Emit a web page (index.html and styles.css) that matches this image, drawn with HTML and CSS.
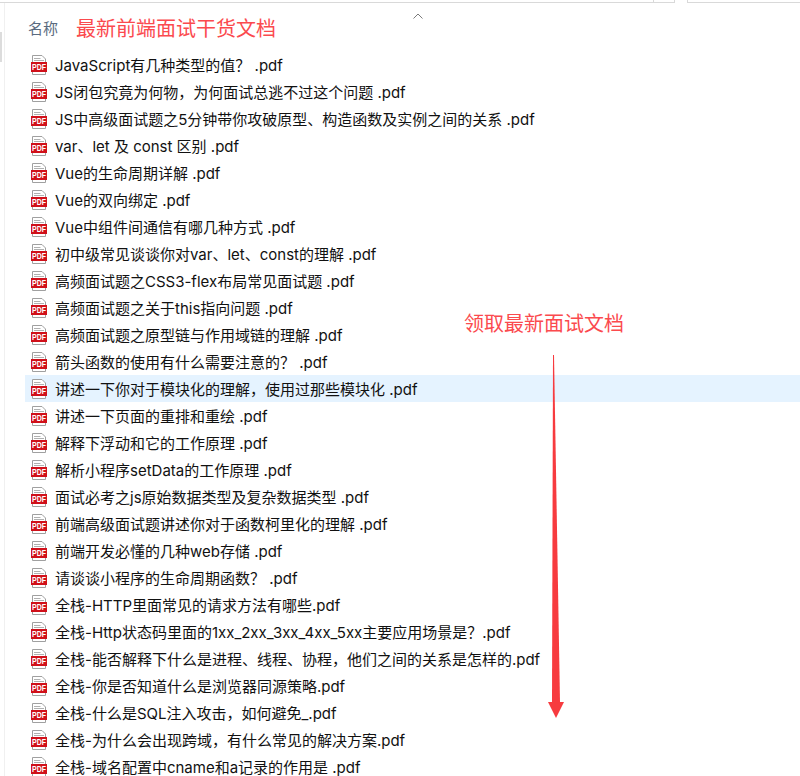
FILE: index.html
```html
<!DOCTYPE html>
<html lang="zh-CN">
<head>
    <meta charset="UTF-8">
    <title>最新前端面试干货文档</title>
    <link rel="stylesheet" href="styles.css">
</head>
<body>
    <svg class="defs">
        <symbol id="pdf" viewBox="0 0 16 20">
            <path d="M1.500 .5H11L14.500 4V19.500H1.500Z" fill="#fff" stroke="#a0a0a0"/>
            <path d="M3 3.500H9.500M3 5.500H13" stroke="#b0b0b0"/>
            <rect x="0" y="7" width="16" height="10" fill="#d0101a"/>
            <text x="8" y="15" class="pdf-label" textLength="14" lengthAdjust="spacingAndGlyphs">PDF</text>
        </symbol>
    </svg>

    <div class="topbar">
        <div class="topbar-main"></div>
        <div class="topbar-cell"></div>
        <div class="topbar-search"></div>
    </div>

    <div class="main">
        <div class="rail"></div>
        <div class="pane">
            <div class="header">
                <span class="header-name">名称</span>
                <span class="title-note">最新前端面试干货文档</span>
                <svg class="sort-arrow" width="10" height="6" viewBox="0 0 10 6"><path d="M.5 5.500L5 1L9.500 5.500" fill="none" stroke="#7a7a7a"/></svg>
            </div>
            <ul class="files">
                <li><svg class="icon"><use href="#pdf"/></svg>JavaScript有几种类型的值？ .pdf</li>
                <li><svg class="icon"><use href="#pdf"/></svg>JS闭包究竟为何物，为何面试总逃不过这个问题 .pdf</li>
                <li><svg class="icon"><use href="#pdf"/></svg>JS中高级面试题之5分钟带你攻破原型、构造函数及实例之间的关系 .pdf</li>
                <li><svg class="icon"><use href="#pdf"/></svg>var、let 及 const 区别 .pdf</li>
                <li><svg class="icon"><use href="#pdf"/></svg>Vue的生命周期详解 .pdf</li>
                <li><svg class="icon"><use href="#pdf"/></svg>Vue的双向绑定 .pdf</li>
                <li><svg class="icon"><use href="#pdf"/></svg>Vue中组件间通信有哪几种方式 .pdf</li>
                <li><svg class="icon"><use href="#pdf"/></svg>初中级常见谈谈你对var、let、const的理解 .pdf</li>
                <li><svg class="icon"><use href="#pdf"/></svg>高频面试题之CSS3-flex布局常见面试题 .pdf</li>
                <li><svg class="icon"><use href="#pdf"/></svg>高频面试题之关于this指向问题 .pdf</li>
                <li><svg class="icon"><use href="#pdf"/></svg>高频面试题之原型链与作用域链的理解 .pdf</li>
                <li><svg class="icon"><use href="#pdf"/></svg>箭头函数的使用有什么需要注意的？ .pdf</li>
                <li class="selected"><svg class="icon"><use href="#pdf"/></svg>讲述一下你对于模块化的理解，使用过那些模块化 .pdf</li>
                <li><svg class="icon"><use href="#pdf"/></svg>讲述一下页面的重排和重绘 .pdf</li>
                <li><svg class="icon"><use href="#pdf"/></svg>解释下浮动和它的工作原理 .pdf</li>
                <li><svg class="icon"><use href="#pdf"/></svg>解析小程序setData的工作原理 .pdf</li>
                <li><svg class="icon"><use href="#pdf"/></svg>面试必考之js原始数据类型及复杂数据类型 .pdf</li>
                <li><svg class="icon"><use href="#pdf"/></svg>前端高级面试题讲述你对于函数柯里化的理解 .pdf</li>
                <li><svg class="icon"><use href="#pdf"/></svg>前端开发必懂的几种web存储 .pdf</li>
                <li><svg class="icon"><use href="#pdf"/></svg>请谈谈小程序的生命周期函数？ .pdf</li>
                <li><svg class="icon"><use href="#pdf"/></svg>全栈-HTTP里面常见的请求方法有哪些.pdf</li>
                <li><svg class="icon"><use href="#pdf"/></svg>全栈-Http状态码里面的1xx_2xx_3xx_4xx_5xx主要应用场景是？.pdf</li>
                <li><svg class="icon"><use href="#pdf"/></svg>全栈-能否解释下什么是进程、线程、协程，他们之间的关系是怎样的.pdf</li>
                <li><svg class="icon"><use href="#pdf"/></svg>全栈-你是否知道什么是浏览器同源策略.pdf</li>
                <li><svg class="icon"><use href="#pdf"/></svg>全栈-什么是SQL注入攻击，如何避免_.pdf</li>
                <li><svg class="icon"><use href="#pdf"/></svg>全栈-为什么会出现跨域，有什么常见的解决方案.pdf</li>
                <li><svg class="icon"><use href="#pdf"/></svg>全栈-域名配置中cname和a记录的作用是 .pdf</li>
            </ul>

            <div class="side-note">领取最新面试文档</div>
            <svg class="down-arrow" width="20" height="364" viewBox="0 0 20 364">
                <path d="M7 0H8L14 347H6Z" fill="#f73b3f"/>
                <path d="M2 347H18L10 363Z" fill="#f73b3f"/>
            </svg>
        </div>
    </div>
</body>
</html>
```

FILE: styles.css
```css
html, body {
    margin: 0;
    height: 776px;
    overflow: hidden;
    background: #fff;
}
body {
    font-family: Inter, "Noto Sans CJK SC", sans-serif;
    font-size: 15px;
    color: #111;
}
.defs {
    display: none;
}
.pdf-label {
    font-family: "Liberation Sans", sans-serif;
    font-size: 9px;
    font-weight: bold;
    fill: #fff;
    text-anchor: middle;
}

.topbar {
    display: flex;
    height: 3px;
}
.topbar-main {
    width: 653px;
    border-bottom: 1px solid #d9d9d9;
}
.topbar-cell {
    width: 20px;
    border-bottom: 1px solid #d9d9d9;
    border-left: 1px solid #d9d9d9;
    border-right: 1px solid #d9d9d9;
}
.topbar-search {
    flex: 1;
    margin-left: 12px;
    border-bottom: 1px solid #d9d9d9;
    border-left: 1px solid #d9d9d9;
}

.main {
    display: flex;
    height: 773px;
}
.rail {
    width: 2px;
    height: 30px;
    margin: 29px 2px 0 0;
    background: #dcdcdc;
    flex: none;
}
.pane {
    position: relative;
    flex: 1;
    border-left: 1px solid #f0f0f0;
}
.header {
    position: relative;
    display: flex;
    align-items: center;
    height: 48px;
    padding-left: 23px;
}
.header-name {
    width: 48px;
    font-size: 15px;
    color: #5a6b80;
}
.title-note {
    font-size: 20px;
    color: #fb4a4e;
}
.sort-arrow {
    position: absolute;
    left: 408px;
    top: 10px;
}

.files {
    list-style: none;
    margin: 0;
    padding: 0 0 0 20px;
}
.files li {
    display: flex;
    align-items: center;
    height: 27px;
    padding-left: 6px;
    white-space: nowrap;
}
.files .selected {
    background: #e5f3ff;
}
.icon {
    width: 16px;
    height: 20px;
    margin: 1px 8px 0 0;
    flex: none;
}

.side-note {
    position: absolute;
    left: 459px;
    top: 305px;
    font-size: 20px;
    color: #fb4a4e;
}
.down-arrow {
    position: absolute;
    left: 541px;
    top: 352px;
}
```
